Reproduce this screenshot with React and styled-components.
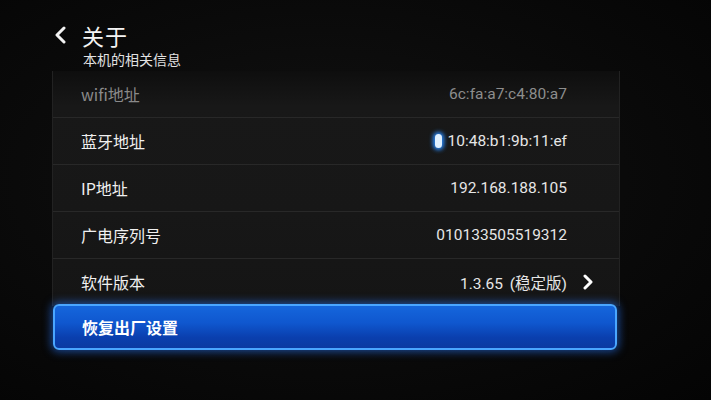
import React from "react";
import styled, { createGlobalStyle } from "styled-components";

const Global = createGlobalStyle`
    html, body {
        margin: 0;
        padding: 0;
        background: #070707;
    }
    body {
        font-family: "Noto Sans CJK SC", "Noto Sans", sans-serif;
    }
`;

const Screen = styled.div`
    width: 711px;
    height: 400px;
    overflow: hidden;
    background: radial-gradient(ellipse at 45% 45%, #121212 0%, #0a0a0a 55%, #040404 100%);
    display: flex;
    flex-direction: column;
`;

const Header = styled.header`
    display: flex;
    flex-direction: column;
    padding: 20px 0 0 52px;
    height: 51px;
`;

const TitleRow = styled.div`
    display: flex;
    align-items: center;
    gap: 12px;
    height: 30px;
`;

const Title = styled.h1`
    margin: 0;
    font-size: 22px;
    font-weight: 400;
    color: #f4f4f4;
    line-height: 30px;
    letter-spacing: 1px;
`;

const Subtitle = styled.div`
    margin-left: 31px;
    font-size: 14px;
    color: #e2e2e2;
    line-height: 18px;
`;

const Panel = styled.section`
    margin-left: 52px;
    width: 566px;
    background: linear-gradient(#0e0e0e, #181818 15%, #171717 60%, #151515);
    border-left: 1px solid #222;
    border-right: 1px solid #222;
    display: flex;
    flex-direction: column;
`;

const Row = styled.div`
    display: flex;
    align-items: center;
    justify-content: space-between;
    height: 46px;
    padding: 0 52px 0 28px;
    border-bottom: 1px solid ${p => (p.$last ? "transparent" : "#282828")};
    position: relative;
`;

const Label = styled.span`
    font-size: 16px;
    color: ${p => (p.$dim ? "#8a8a8a" : "#f0f0f0")};
`;

const Value = styled.span`
    font-family: Roboto, "Noto Sans CJK SC", sans-serif;
    font-size: 15.5px;
    word-spacing: 3px;
    color: ${p => (p.$dim ? "#8d8d8d" : "#e6e6e6")};
    display: flex;
    align-items: center;
    gap: 6px;
`;

const Dot = styled.span`
    display: inline-block;
    width: 7px;
    height: 14px;
    border-radius: 4px;
    background: #dff0ff;
    box-shadow: 0 0 4px 2px #2a8cff;
`;

const Chevron = styled.svg`
    position: absolute;
    right: 24px;
    top: 15px;
`;

const SelWrap = styled.div`
    margin-left: 53px;
    margin-top: -2px;
`;

const Selected = styled.div`
    display: flex;
    align-items: center;
    height: 46px;
    width: 564px;
    padding-left: 27px;
    box-sizing: border-box;
    border: 2px solid #4aa6ff;
    border-radius: 6px;
    background: linear-gradient(#1566dc 0%, #0f57cf 40%, #0a3fae 75%, #0b3aa2 100%);
    box-shadow: 0 0 8px 2px rgba(40, 120, 255, 0.55);
    font-size: 16px;
    font-weight: 700;
    color: #ffffff;
`;

const rows = [
    { label: "wifi地址", value: "6c:fa:a7:c4:80:a7", dim: true },
    { label: "蓝牙地址", value: "10:48:b1:9b:11:ef", dot: true },
    { label: "IP地址", value: "192.168.188.105" },
    { label: "广电序列号", value: "010133505519312" },
    { label: "软件版本", value: "1.3.65 (稳定版)", more: true, last: true },
];

export default function App() {
    return (
        <Screen>
            <Global />
            <Header>
                <TitleRow>
                    <svg width="18" height="18" viewBox="0 0 18 18">
                        <path d="M12 2 L5 9 L12 16" stroke="#f2f2f2" strokeWidth="3" fill="none" strokeLinecap="round" strokeLinejoin="round" />
                    </svg>
                    <Title>关于</Title>
                </TitleRow>
                <Subtitle>本机的相关信息</Subtitle>
            </Header>
            <Panel>
                {rows.map(r => (
                    <Row key={r.label} $last={r.last}>
                        <Label $dim={r.dim}>{r.label}</Label>
                        <Value $dim={r.dim}>
                            {r.dot && <Dot />}
                            <span>{r.value}</span>
                        </Value>
                        {r.more && (
                            <Chevron width="14" height="16" viewBox="0 0 14 16">
                                <path d="M4 2 L10 8 L4 14" stroke="#ffffff" strokeWidth="3" fill="none" strokeLinecap="round" strokeLinejoin="round" />
                            </Chevron>
                        )}
                    </Row>
                ))}
            </Panel>
            <SelWrap>
                <Selected>恢复出厂设置</Selected>
            </SelWrap>
        </Screen>
    );
}
